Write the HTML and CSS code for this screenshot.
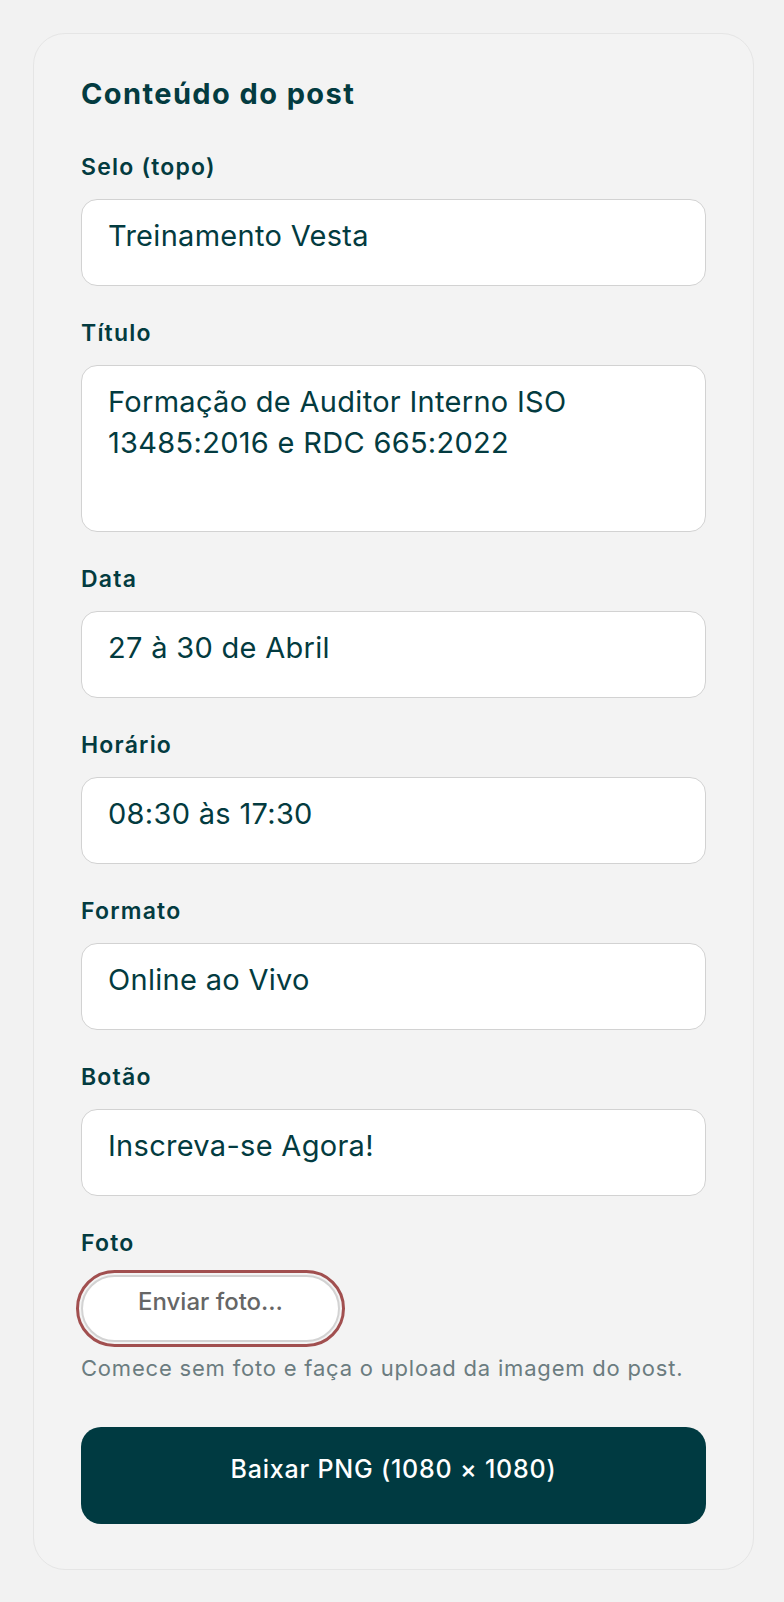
FILE: index.html
```html
<!DOCTYPE html>
<html lang="pt-BR">
  <head>
    <meta charset="UTF-8" />
    <meta name="viewport" content="width=device-width, initial-scale=1.0" />
    <title>Gerador de post</title>
    <link rel="stylesheet" href="styles.css">
  </head>
  <body>
    <div class="panel">
      <h2>Conteúdo do post</h2>

      <div class="field">
        <label for="selo">Selo (topo)</label>
        <input type="text" id="selo" value="Treinamento Vesta" />
      </div>

      <div class="field">
        <label for="titulo">Título</label>
        <textarea id="titulo" rows="3">Formação de Auditor Interno ISO 13485:2016 e RDC 665:2022</textarea>
      </div>

      <div class="field">
        <label for="data">Data</label>
        <input type="text" id="data" value="27 à 30 de Abril" />
      </div>

      <div class="field">
        <label for="horario">Horário</label>
        <input type="text" id="horario" value="08:30 às 17:30" />
      </div>

      <div class="field">
        <label for="formato">Formato</label>
        <input type="text" id="formato" value="Online ao Vivo" />
      </div>

      <div class="field">
        <label for="botao">Botão</label>
        <input type="text" id="botao" value="Inscreva-se Agora!" />
      </div>

      <div class="field photo">
        <label>Foto</label>
        <button type="button" class="upload-btn">Enviar foto…</button>
        <p class="hint">Comece sem foto e faça o upload da imagem do post.</p>
      </div>

      <button type="button" class="download-btn">Baixar PNG (1080 × 1080)</button>
    </div>
  </body>
</html>
```

FILE: styles.css
```css
body {
  font-family: "Inter", "Open Sans", sans-serif;
  background-color: #f2f2f2;
  color: #033b40;
  margin: 0;
  padding: 33px 32px 32px 33px;
}
.panel {
  width: 625px;
  background: #f3f3f3;
  border: 1px solid #e5e5e5;
  border-radius: 32px;
  padding: 43px 47px 45px 47px;
}
h2 {
  font-size: 29px;
  line-height: 34px;
  font-weight: 700;
  letter-spacing: 1.4px;
  margin: 0 0 44px 0;
}
.field {
  margin-bottom: 35px;
}
label {
  display: block;
  font-size: 23px;
  line-height: 24px;
  font-weight: 600;
  letter-spacing: 1.2px;
  margin-bottom: 20px;
}
input,
textarea {
  display: block;
  width: 100%;
  box-sizing: border-box;
  border: 1px solid #d2d2d2;
  border-radius: 16px;
  background: #fff;
  color: #033b40;
  font-family: inherit;
  font-size: 29px;
  letter-spacing: 0.3px;
  padding: 0 26px;
}
input {
  height: 87px;
  padding-bottom: 14px;
}
textarea {
  height: 167px;
  line-height: 41px;
  padding-top: 15px;
  resize: none;
}
.upload-btn {
  display: block;
  width: 259px;
  height: 67px;
  border: 2px solid #d3d3d3;
  border-radius: 34px;
  background: #fff;
  color: #666;
  font-family: inherit;
  font-size: 24px;
  font-weight: 500;
  padding: 0 0 14px 0;
  outline: 3px solid #a14f4f;
  outline-offset: 2px;
}
.hint {
  margin: 14px 0 0 0;
  font-size: 22px;
  line-height: 24px;
  letter-spacing: 0.8px;
  color: #6b7c80;
}
.photo {
  margin-bottom: 47px;
}
.download-btn {
  display: block;
  width: 100%;
  height: 97px;
  border: none;
  border-radius: 20px;
  background: #003a41;
  color: #fff;
  font-family: inherit;
  font-size: 25px;
  font-weight: 500;
  letter-spacing: 0.8px;
  padding: 0 0 14px 0;
}
```
